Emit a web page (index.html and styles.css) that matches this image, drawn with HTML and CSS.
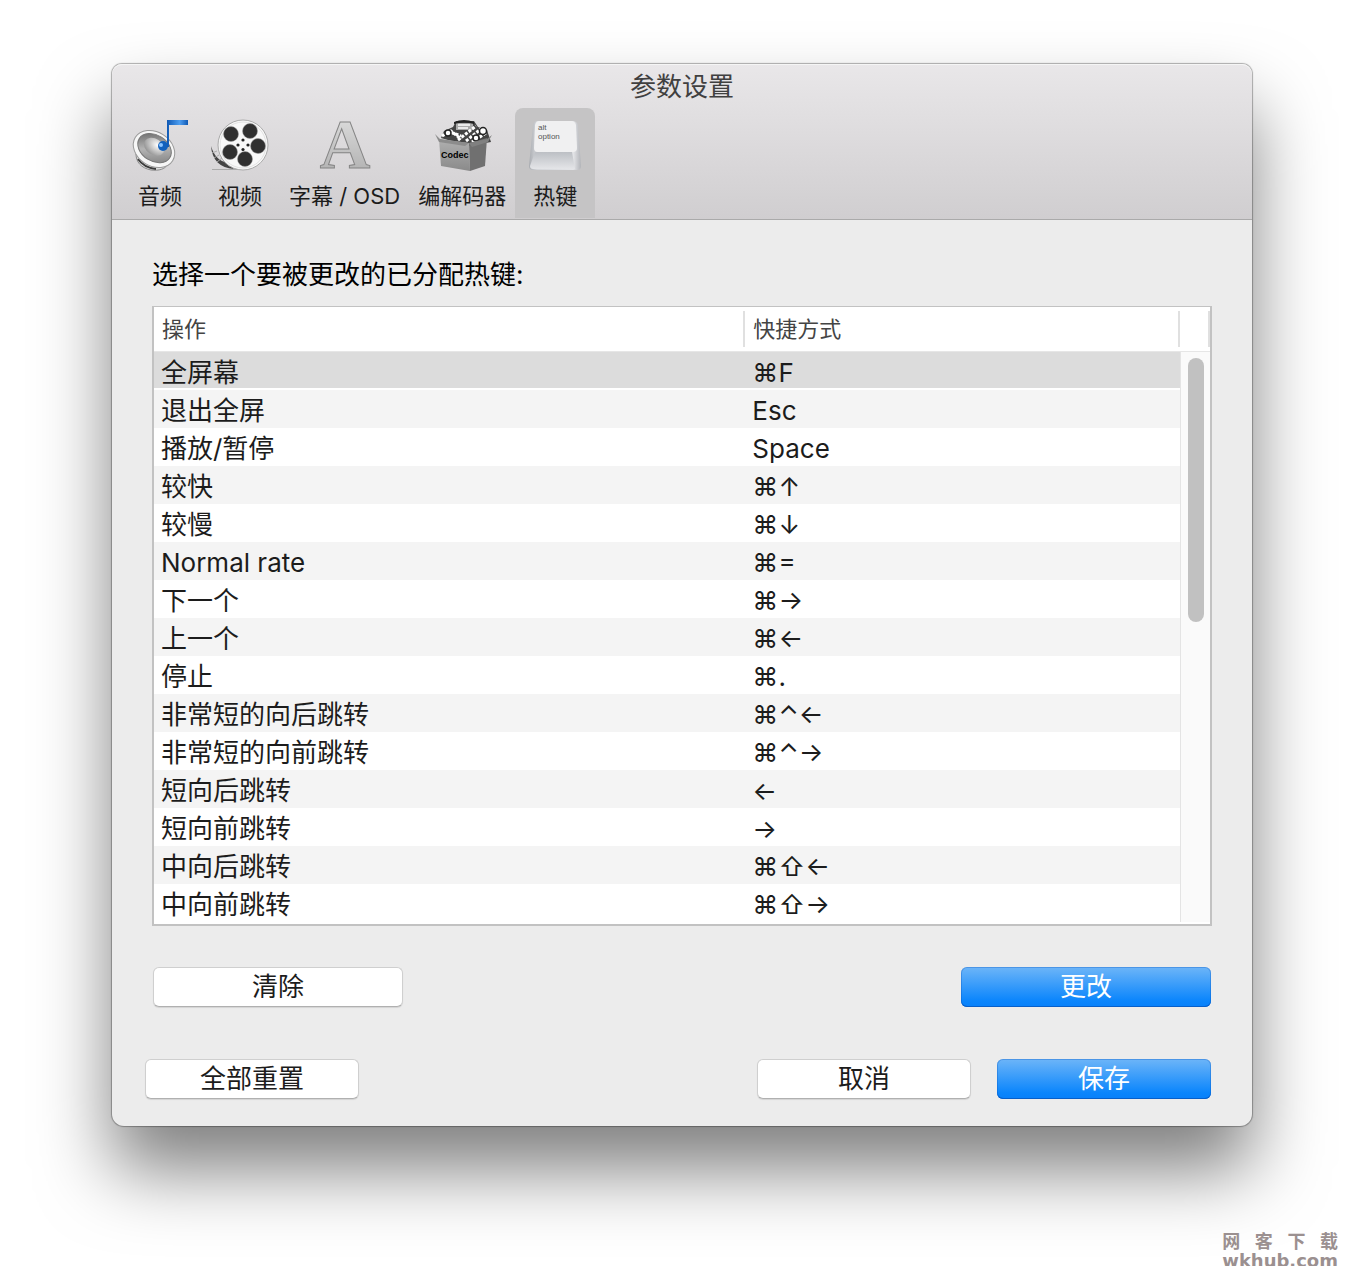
FILE: index.html
```html
<!DOCTYPE html>
<html lang="zh-CN">
<head>
    <meta charset="UTF-8">
    <meta name="viewport" content="width=device-width, initial-scale=1.0">
    <title>参数设置</title>
    <link rel="stylesheet" href="styles.css">
</head>
<body>

    <div class="desktop">
        <main class="window">
            <header class="toolbar">
                <h1>参数设置</h1>
                <nav class="tabs">
                    <!-- Audio -->
                    <button type="button" class="tab">
                        <svg width="60" height="56" viewBox="0 0 60 56" aria-hidden="true">
                            <defs>
                                <linearGradient id="cone" x1="0" y1="0" x2="1" y2="1">
                                    <stop offset="0" stop-color="#5c5c5c"/>
                                    <stop offset="0.5" stop-color="#b4b4b4"/>
                                    <stop offset="1" stop-color="#777"/>
                                </linearGradient>
                                <radialGradient id="dome" cx="0.6" cy="0.3" r="0.8">
                                    <stop offset="0" stop-color="#fff"/>
                                    <stop offset="1" stop-color="#888"/>
                                </radialGradient>
                                <linearGradient id="note" x1="0" y1="0" x2="1" y2="0">
                                    <stop offset="0" stop-color="#1059b4"/>
                                    <stop offset="0.6" stop-color="#4c9df0"/>
                                    <stop offset="1" stop-color="#1059b4"/>
                                </linearGradient>
                            </defs>
                            <path d="M6 38c0 8 5 14 15 16 8 1 14-1 16-5z" fill="#ddd" stroke="#8a8a8a"/>
                            <path d="M8 43c4 6 10 9 18 10" fill="none" stroke="#3c3c3c" stroke-width="2"/>
                            <g transform="rotate(32 24 33)">
                                <ellipse cx="24" cy="33" rx="22" ry="17" fill="#f6f6f6" stroke="#999"/>
                                <ellipse cx="24" cy="32" rx="18" ry="13" fill="url(#cone)" stroke="#777"/>
                                <ellipse cx="23" cy="31" rx="11" ry="8" fill="url(#dome)"/>
                            </g>
                            <circle cx="33" cy="30" r="5" fill="#1261bd"/>
                            <circle cx="31" cy="29" r="2" fill="#8cc4ff"/>
                            <path d="M37 31V4h21v5H39v22z" fill="url(#note)"/>
                        </svg>
                        <span>音频</span>
                    </button>
                    <!-- Video -->
                    <button type="button" class="tab">
                        <svg width="60" height="56" viewBox="0 0 60 56" aria-hidden="true">
                            <path d="M2 53.500h26" stroke="#aaa"/>
                            <path d="M1 30c1 14 9 22 23 23l-6-6C9 45 4 40 1 30z" fill="#444"/>
                            <path d="M2 37l5-2M4 42l5-3M7 46l5-4" stroke="#aaa"/>
                            <circle cx="33" cy="29" r="25" fill="#f8f8f8" stroke="#aaa"/>
                            <circle cx="33" cy="29" r="23" fill="none" stroke="#e2e2e2"/>
                            <g fill="#303030" stroke="#999" stroke-width="0.500">
                                <circle cx="21" cy="18" r="7.500"/>
                                <circle cx="40" cy="15" r="7.500"/>
                                <circle cx="48" cy="30" r="7.500"/>
                                <circle cx="35" cy="43" r="7.500"/>
                                <circle cx="20" cy="36" r="7.500"/>
                            </g>
                            <g fill="#222">
                                <circle cx="33" cy="24" r="1.600"/>
                                <circle cx="28" cy="29" r="1.600"/>
                                <circle cx="38" cy="29" r="1.600"/>
                                <circle cx="33" cy="33.500" r="1.600"/>
                            </g>
                        </svg>
                        <span>视频</span>
                    </button>
                    <!-- Subtitles -->
                    <button type="button" class="tab">
                        <svg width="60" height="56" viewBox="0 0 60 56" aria-hidden="true">
                            <defs>
                                <linearGradient id="letter" x1="0" y1="0" x2="0" y2="1">
                                    <stop offset="0" stop-color="#e4e4e4"/>
                                    <stop offset="1" stop-color="#aaa"/>
                                </linearGradient>
                            </defs>
                            <text x="30" y="52" class="icon-letter">A</text>
                        </svg>
                        <span>字幕 / OSD</span>
                    </button>
                    <!-- Codecs -->
                    <button type="button" class="tab">
                        <svg width="60" height="56" viewBox="0 0 60 56" aria-hidden="true">
                            <defs>
                                <linearGradient id="box" x1="0" y1="0" x2="0" y2="1">
                                    <stop offset="0" stop-color="#b0b0b0"/>
                                    <stop offset="1" stop-color="#8a8a8a"/>
                                </linearGradient>
                            </defs>
                            <path d="M9 22l3-7 9-4 3-6h18l4 6 9 3 4 12-22 4z" fill="#444"/>
                            <path d="M24 7h17v7H24z" fill="#aaa"/>
                            <path d="M22 6q10-4 20 0v2q-10-3-20 0z" fill="#222"/>
                            <path d="M26 9h12M26 12h10" stroke="#fff" stroke-width="1.500"/>
                            <g fill="none" stroke="#fff" stroke-width="3" stroke-dasharray="3 1.500">
                                <path d="M10 20l9-5 10 8"/>
                                <path d="M26 24L44 10"/>
                                <path d="M34 25L50 12"/>
                                <path d="M40 26l14-9"/>
                                <path d="M15 15l14 5"/>
                            </g>
                            <g fill="#fff" stroke="#222" stroke-width="1.500">
                                <circle cx="16" cy="17" r="3"/>
                                <circle cx="51" cy="15" r="3.500"/>
                                <circle cx="44" cy="22" r="3"/>
                            </g>
                            <path d="M7 23l30 4 1 28-29-5z" fill="url(#box)"/>
                            <path d="M37 27l18-5-2 28-15 5z" fill="#707070"/>
                            <path d="M3 18l5 5 29 4-4 3-26-4z" fill="#8c8c8c"/>
                            <path d="M37 27l18-4 5-4-4 7-16 5z" fill="#808080"/>
                            <text x="9" y="42" class="icon-codec">Codec</text>
                        </svg>
                        <span>编解码器</span>
                    </button>
                    <!-- Hotkeys -->
                    <button type="button" class="tab active" aria-current="page">
                        <svg width="60" height="56" viewBox="0 0 60 56" aria-hidden="true">
                            <defs>
                                <linearGradient id="key" x1="0" y1="0" x2="1" y2="0">
                                    <stop offset="0" stop-color="#a8abb0"/>
                                    <stop offset="0.150" stop-color="#d4d6da"/>
                                    <stop offset="0.850" stop-color="#e4e5e8"/>
                                    <stop offset="1" stop-color="#b2b4b9"/>
                                </linearGradient>
                                <linearGradient id="keyFront" x1="0" y1="0" x2="0" y2="1">
                                    <stop offset="0" stop-color="#bcbfc4"/>
                                    <stop offset="1" stop-color="#e4e5e8"/>
                                </linearGradient>
                            </defs>
                            <path d="M13 5h34q5 0 6 4l3 41q0 4-4 4H8q-4 0-4-4L8 9q1-4 5-4z" fill="url(#key)"/>
                            <path d="M10 36h37l3 17H8q-3 0-3-3z" fill="url(#keyFront)"/>
                            <path d="M14 5h32q4 0 5 4l1 23q0 4-4 4H13q-4 0-4-4l1-23q1-4 4-4z" fill="#f0f0f1"/>
                            <text x="13" y="14" class="icon-key">alt</text>
                            <text x="13" y="23" class="icon-key">option</text>
                        </svg>
                        <span>热键</span>
                    </button>
                </nav>
            </header>

            <section class="content">
                <h2 id="hotkeysLabel">选择一个要被更改的已分配热键:</h2>

                <div class="table-box">
                    <table aria-labelledby="hotkeysLabel">
                        <colgroup>
                            <col class="col-action">
                            <col>
                            <col class="col-scroll">
                        </colgroup>
                        <thead>
                            <tr>
                                <th scope="col"><div>操作</div></th>
                                <th scope="col"><div>快捷方式</div></th>
                                <th><div></div></th>
                            </tr>
                        </thead>
                        <tbody>
                            <tr class="selected">
                                <td>全屏幕</td>
                                <td>⌘F</td>
                                <td class="track" rowspan="15"><div class="thumb"></div></td>
                            </tr>
                            <tr><td>退出全屏</td><td>Esc</td></tr>
                            <tr><td>播放/暂停</td><td>Space</td></tr>
                            <tr><td>较快</td><td>⌘↑</td></tr>
                            <tr><td>较慢</td><td>⌘↓</td></tr>
                            <tr><td>Normal rate</td><td>⌘=</td></tr>
                            <tr><td>下一个</td><td>⌘→</td></tr>
                            <tr><td>上一个</td><td>⌘←</td></tr>
                            <tr><td>停止</td><td>⌘.</td></tr>
                            <tr><td>非常短的向后跳转</td><td>⌘⌃←</td></tr>
                            <tr><td>非常短的向前跳转</td><td>⌘⌃→</td></tr>
                            <tr><td>短向后跳转</td><td>←</td></tr>
                            <tr><td>短向前跳转</td><td>→</td></tr>
                            <tr><td>中向后跳转</td><td>⌘⇧←</td></tr>
                            <tr><td>中向前跳转</td><td>⌘⇧→</td></tr>
                        </tbody>
                    </table>
                </div>

                <div class="actions">
                    <button type="button" class="btn wide">清除</button>
                    <button type="button" class="btn wide primary">更改</button>
                </div>
            </section>

            <footer class="footer">
                <button type="button" class="btn">全部重置</button>
                <div class="footer-right">
                    <button type="button" class="btn">取消</button>
                    <button type="button" class="btn primary">保存</button>
                </div>
            </footer>
        </main>

        <div class="watermark">
            <div class="watermark-name">网客下载</div>
            <div class="watermark-url">wkhub.com</div>
        </div>
    </div>

</body>
</html>
```

FILE: styles.css
```css
* {
    box-sizing: border-box;
}

body {
    margin: 0;
    background-color: #fff;
    color: #1c1c1c;
    font-family: Inter, "Noto Sans CJK SC", sans-serif;
    font-size: 26px;
}

.desktop {
    position: relative;
    padding: 64px 112px 140px;
}

.window {
    background-color: #ececec;
    border-radius: 10px 10px 12px 12px;
    box-shadow: 0 0 1px 1px rgba(0, 0, 0, 0.3), 0 44px 72px rgba(0, 0, 0, 0.5);
}

/* Toolbar */
.toolbar {
    padding: 0 8px;
    background: linear-gradient(#e9e7e9, #d0ced0);
    border-bottom: 1px solid #aaa;
    border-radius: 10px 10px 0 0;
    box-shadow: inset 0 1px 0 #f5f5f5;
}

h1 {
    margin: 0;
    padding-top: 2px;
    font-size: 26px;
    font-weight: 400;
    line-height: 42px;
    color: #404040;
    text-align: center;
}

.tabs {
    display: flex;
    padding-bottom: 1px;
}

.tab {
    display: flex;
    flex-direction: column;
    align-items: center;
    gap: 8px;
    min-width: 80px;
    padding: 8px 9px 6px;
    border: none;
    border-radius: 8px 8px 0 0;
    background: none;
    color: #1c1c1c;
    font-family: inherit;
    font-size: 22px;
    line-height: 32px;
    white-space: nowrap;
}

.tab.active {
    background-color: #c5c4c5;
}

.tab svg {
    display: block;
    overflow: visible;
}

.icon-letter {
    font-family: "Liberation Serif", serif;
    font-size: 70px;
    text-anchor: middle;
    font-weight: 700;
    fill: url(#letter);
    stroke: #858585;
}

.icon-codec {
    font-family: "Liberation Sans", sans-serif;
    font-size: 9px;
    font-weight: 700;
    fill: #000;
}

.icon-key {
    font-family: "Liberation Sans", sans-serif;
    font-size: 8px;
    fill: #555;
}

/* Content */
.content {
    padding: 34px 40px 0;
}

h2 {
    margin: 0;
    font-size: 26px;
    font-weight: 400;
    line-height: 42px;
    color: #000;
}

.table-box {
    margin-top: 10px;
    padding-bottom: 2px;
    background-color: #fff;
    border: 2px solid #c2c2c2;
    border-top-width: 1px;
}

table {
    width: 100%;
    table-layout: fixed;
    border-collapse: collapse;
}

.col-action {
    width: 56%;
}

.col-scroll {
    width: 30px;
}

th {
    height: 44px;
    padding: 4px 0;
    border-bottom: 1px solid #e6e6e6;
    font-size: 22px;
    font-weight: 400;
    line-height: 36px;
    text-align: left;
    color: #444;
}

th div {
    height: 36px;
    padding-left: 8px;
    border-right: 2px solid #e0e0e0;
}

td {
    height: 38px;
    padding: 4px 0 0 7px;
    line-height: 34px;
}

tbody tr:nth-child(even) {
    background-color: #f4f4f4;
}

.selected td {
    background-color: #dcdcdc;
    box-shadow: inset 0 -2px 0 #fff;
}

.selected .track {
    padding: 6px 0 0 7px;
    background-color: #fafafa;
    border-left: 1px solid #e4e4e4;
    box-shadow: none;
    vertical-align: top;
}

.thumb {
    width: 16px;
    height: 264px;
    border-radius: 8px;
    background-color: #c1c1c1;
}

/* Buttons */
.actions {
    display: flex;
    justify-content: space-between;
    padding: 41px 1px 0;
}

.footer {
    display: flex;
    justify-content: space-between;
    padding: 52px 41px 27px 33px;
}

.footer-right {
    display: flex;
    gap: 26px;
}

.btn {
    width: 214px;
    height: 40px;
    padding: 0;
    border: 1px solid #cfcfcf;
    border-bottom-color: #b0b0b0;
    border-radius: 6px;
    background-color: #fff;
    box-shadow: 0 1px 1px rgba(0, 0, 0, 0.1);
    color: #1c1c1c;
    font-family: inherit;
    font-size: 26px;
    line-height: 38px;
}

.btn.wide {
    width: 250px;
}

.btn.primary {
    border: none;
    background: linear-gradient(#6db5f8, #0a85fc 85%, #0780fa);
    box-shadow: inset 0 0 0 1px rgba(0, 80, 190, 0.3), inset 0 -1px 0 #0b66cf;
    color: #fff;
}

/* Watermark */
.watermark {
    position: absolute;
    right: 26px;
    bottom: -4px;
    color: #9b9090;
    font-weight: 700;
}

.watermark-name {
    font-size: 18px;
    line-height: 20px;
    text-align-last: justify;
}

.watermark-url {
    font-family: "DejaVu Sans", sans-serif;
    font-size: 18px;
    line-height: 18px;
}
```
